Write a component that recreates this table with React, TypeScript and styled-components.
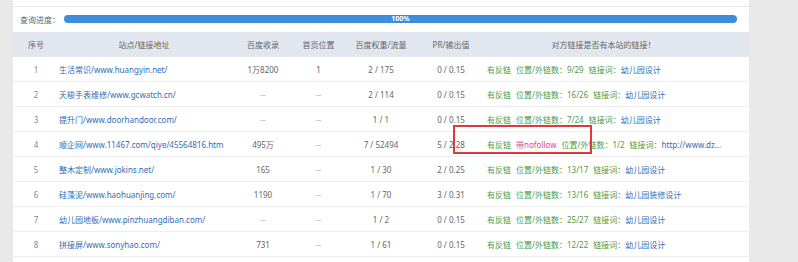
import React from 'react';
import styled, { createGlobalStyle } from 'styled-components';

const GlobalStyle = createGlobalStyle`
    html, body {
        margin: 0;
        padding: 0;
        background: #e9e9e9;
        font-family: "Noto Sans", "Noto Sans CJK SC", sans-serif;
        font-size: 8px;
    }
`;

const Page = styled.div`
    display: flex;
    width: 798px;
    height: 262px;
    overflow: hidden;
`;

const Panel = styled.div`
    position: relative;
    margin-left: 13px;
    width: 736px;
    background: #fff;
`;

const TopStrip = styled.div`
    height: 6px;
    border-bottom: 1px solid #e6e6e6;
`;

const ProgressRow = styled.div`
    display: flex;
    align-items: center;
    height: 25px;
    padding: 0 12px 0 7px;
    color: #666;
`;

const ProgressLabel = styled.span`
    width: 44px;
    flex-shrink: 0;
`;

const Bar = styled.div`
    flex: 1;
    height: 8px;
    border-radius: 4px;
    background: #3d8fdc;
    display: flex;
    align-items: center;
    justify-content: center;
    color: #fff;
    font-weight: bold;
    font-size: 7px;
    line-height: 8px;
    margin-top: -2px;
`;

const cols = '46px 170px 68px 43px 82px 58px 1fr';

const HeadRow = styled.div`
    display: grid;
    grid-template-columns: ${cols};
    height: 25px;
    align-items: center;
    background: #e2e6ee;
    color: #666;
`;

const HeadCell = styled.div<{ $pr?: number }>`
    text-align: center;
    padding-right: ${p => p.$pr || 0}px;
    white-space: nowrap;
`;

const Row = styled.div`
    display: grid;
    grid-template-columns: ${cols};
    height: 24px;
    align-items: center;
    border-bottom: 1px solid #eeeeee;
    color: #666;
`;

const Cell = styled.div<{ $muted?: boolean }>`
    text-align: center;
    white-space: nowrap;
    color: ${p => (p.$muted ? '#aaa' : '#666')};
`;

const Seq = styled(Cell)`
    color: #888;
`;

const SiteCell = styled.div`
    color: #2f6db5;
    white-space: nowrap;
    overflow: hidden;
`;

const LinkCell = styled.div`
    padding-left: 7px;
    white-space: nowrap;
    overflow: hidden;
    display: flex;
    gap: 5px;
`;

const Green = styled.span`
    color: #4f9b45;
`;

const Blue = styled.span`
    color: #2f6db5;
`;

const Pink = styled.span`
    color: #e0479a;
`;

const Mark = styled.div`
    position: absolute;
    left: 440px;
    top: 125px;
    width: 135px;
    height: 25px;
    border: 2px solid #e0393d;
`;

interface RowData {
    site: string;
    sl: string;
    pos: string;
    weight: string;
    pr: string;
    count: string;
    word: string;
    nofollow?: boolean;
}

const rows: RowData[] = [
    { site: '生活常识/www.huangyin.net/', sl: '1万8200', pos: '1', weight: '2 / 175', pr: '0 / 0.15', count: '9/29', word: '幼儿园设计' },
    { site: '天梭手表维修/www.gcwatch.cn/', sl: '--', pos: '--', weight: '2 / 114', pr: '0 / 0.15', count: '16/26', word: '幼儿园设计' },
    { site: '提升门/www.doorhandoor.com/', sl: '--', pos: '--', weight: '1 / 1', pr: '0 / 0.15', count: '7/24', word: '幼儿园设计' },
    { site: '顺企网/www.11467.com/qiye/45564816.htm', sl: '495万', pos: '--', weight: '7 / 52494', pr: '5 / 2.28', count: '1/2', word: 'http://www.dz...', nofollow: true },
    { site: '整木定制/www.jokins.net/', sl: '165', pos: '--', weight: '1 / 30', pr: '2 / 0.25', count: '13/17', word: '幼儿园设计' },
    { site: '硅藻泥/www.haohuanjing.com/', sl: '1190', pos: '--', weight: '1 / 70', pr: '3 / 0.31', count: '13/16', word: '幼儿园装修设计' },
    { site: '幼儿园地板/www.pinzhuangdiban.com/', sl: '--', pos: '--', weight: '1 / 2', pr: '0 / 0.15', count: '25/27', word: '幼儿园设计' },
    { site: '拼接屏/www.sonyhao.com/', sl: '731', pos: '--', weight: '1 / 61', pr: '0 / 0.15', count: '12/22', word: '幼儿园设计' },
];

const App: React.FC = () => {
    return (
        <Page>
            <GlobalStyle />
            <Panel>
                <TopStrip />
                <ProgressRow>
                    <ProgressLabel>查询进度：</ProgressLabel>
                    <Bar>100%</Bar>
                </ProgressRow>
                <HeadRow>
                    <HeadCell>序号</HeadCell>
                    <HeadCell>站点/链接地址</HeadCell>
                    <HeadCell>百度收录</HeadCell>
                    <HeadCell>首页位置</HeadCell>
                    <HeadCell>百度权重/流量</HeadCell>
                    <HeadCell>PR/输出值</HeadCell>
                    <HeadCell $pr={22}>对方链接是否有本站的链接！</HeadCell>
                </HeadRow>
                {rows.map((r, i) => (
                    <Row key={i}>
                        <Seq>{i + 1}</Seq>
                        <SiteCell>{r.site}</SiteCell>
                        <Cell $muted={r.sl === '--'}>{r.sl}</Cell>
                        <Cell $muted={r.pos === '--'}>{r.pos}</Cell>
                        <Cell>{r.weight}</Cell>
                        <Cell>{r.pr}</Cell>
                        <LinkCell>
                            <Green>有反链</Green>
                            {r.nofollow && <Pink>带nofollow</Pink>}
                            <Green>位置/外链数：{r.count}</Green>
                            <span>
                                <Green>链接词：</Green>
                                <Blue>{r.word}</Blue>
                            </span>
                        </LinkCell>
                    </Row>
                ))}
                <Mark />
            </Panel>
        </Page>
    );
};

export default App;
